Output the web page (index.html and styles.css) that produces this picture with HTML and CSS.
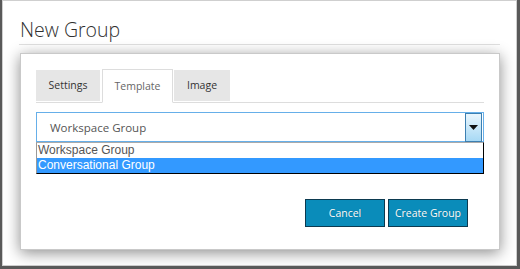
FILE: index.html
```html
<!DOCTYPE html>
<html lang="en">
<head>
  <meta charset="UTF-8">
  <title>New Group</title>
  <link rel="stylesheet" href="styles.css">
</head>
<body>
  <div class="dialog">
    <h1 class="dialog-title">New Group</h1>

    <div class="panel">
      <!-- Tabs -->
      <ul class="tabs">
        <li class="tab tab-settings">Settings</li>
        <li class="tab tab-template active">Template</li>
        <li class="tab tab-image">Image</li>
      </ul>

      <!-- Template picker (open) -->
      <div class="picker">
        <div class="picker-box">
          <span class="picker-value">Workspace Group</span>
          <span class="picker-arrow">
            <svg width="9" height="5" viewBox="0 0 9 5"><path d="M0 0h9L4.5 5z" fill="#111"/></svg>
          </span>
        </div>
        <ul class="picker-list">
          <li>Workspace Group</li>
          <li class="selected">Conversational Group</li>
        </ul>
      </div>

      <div class="actions">
        <button class="btn">Cancel</button>
        <button class="btn">Create Group</button>
      </div>
    </div>
  </div>
</body>
</html>
```

FILE: styles.css
```css
body {
  margin: 0;
  padding: 0;
  background-color: #595959;
  font-family: "Open Sans", Arial, sans-serif;
}

.dialog {
  width: 481px;
  height: 264px;
  margin: 0 3px 0 2px;
  padding: 0 16px;
  background-color: white;
  border: 1px solid #cfcfcf;
}

.dialog-title {
  margin: 0;
  padding: 17px 0 2px 1px;
  font-size: 19.5px;
  line-height: 24px;
  font-weight: 300;
  color: #2f2f2f;
  border-bottom: 1px solid #e0e0e0;
}

.panel {
  margin: 8px 0 0 1px;
  padding: 16px 15px 22px 15px;
  border: 1px solid #c9c9c9;
  background-color: white;
  box-shadow: 0 3px 14px rgba(0,0,0,0.45);
}

/* Tabs */
.tabs {
  list-style-type: none;
  margin: 0;
  padding: 0;
  display: flex;
  border-bottom: 1px solid #dddddd;
}

.tab {
  height: 31px;
  line-height: 31px;
  text-align: center;
  font-size: 10.5px;
  color: #333;
  background-color: #e6e6e6;
}

.tab-settings {
  width: 64px;
  margin-right: 2px;
}

.tab-template {
  width: 69px;
  margin-right: 1px;
}

.tab-image {
  width: 56px;
}

.tab.active {
  height: 32px;
  line-height: 32px;
  margin-top: -1px;
  margin-bottom: -1px;
  background-color: white;
  border: 1px solid #dddddd;
  border-bottom-color: white;
  color: #666;
}

/* Picker */
.picker {
  margin-top: 9px;
}

.picker-box {
  display: flex;
  align-items: center;
  height: 28px;
  border: 1px solid #66afe9;
  padding-left: 13px;
}

.picker-value {
  flex: 1;
  font-size: 11.5px;
  color: #555;
}

.picker-arrow {
  width: 15px;
  height: 27px;
  margin-right: 1px;
  border: 1px solid #3c7fb1;
  background: linear-gradient(#eaf6fd, #a7d9f5);
  display: flex;
  align-items: center;
  justify-content: center;
}

.picker-list {
  list-style-type: none;
  margin: 0;
  padding: 0;
  border: 1px solid #000;
  border-left-color: #999;
  border-top-color: #aaa;
  font-family: "Liberation Sans", Arial, sans-serif;
  font-size: 12px;
  color: #555;
}

.picker-list li {
  height: 15px;
  line-height: 15px;
  padding-left: 1px;
}

.picker-list li.selected {
  background-color: #3399ff;
  color: white;
}

/* Buttons */
.actions {
  display: flex;
  justify-content: flex-end;
  gap: 3px;
  margin-top: 25px;
  padding-right: 16px;
}

.btn {
  width: 80px;
  height: 28px;
  padding: 0;
  background-color: #0a8cba;
  border: 1px solid #0c3a50;
  color: white;
  font-family: "Open Sans", Arial, sans-serif;
  font-size: 10.5px;
  text-shadow: 0 0 1px rgba(0,0,0,0.3);
  cursor: pointer;
}

.btn:hover {
  background-color: #0979a1;
}
```
